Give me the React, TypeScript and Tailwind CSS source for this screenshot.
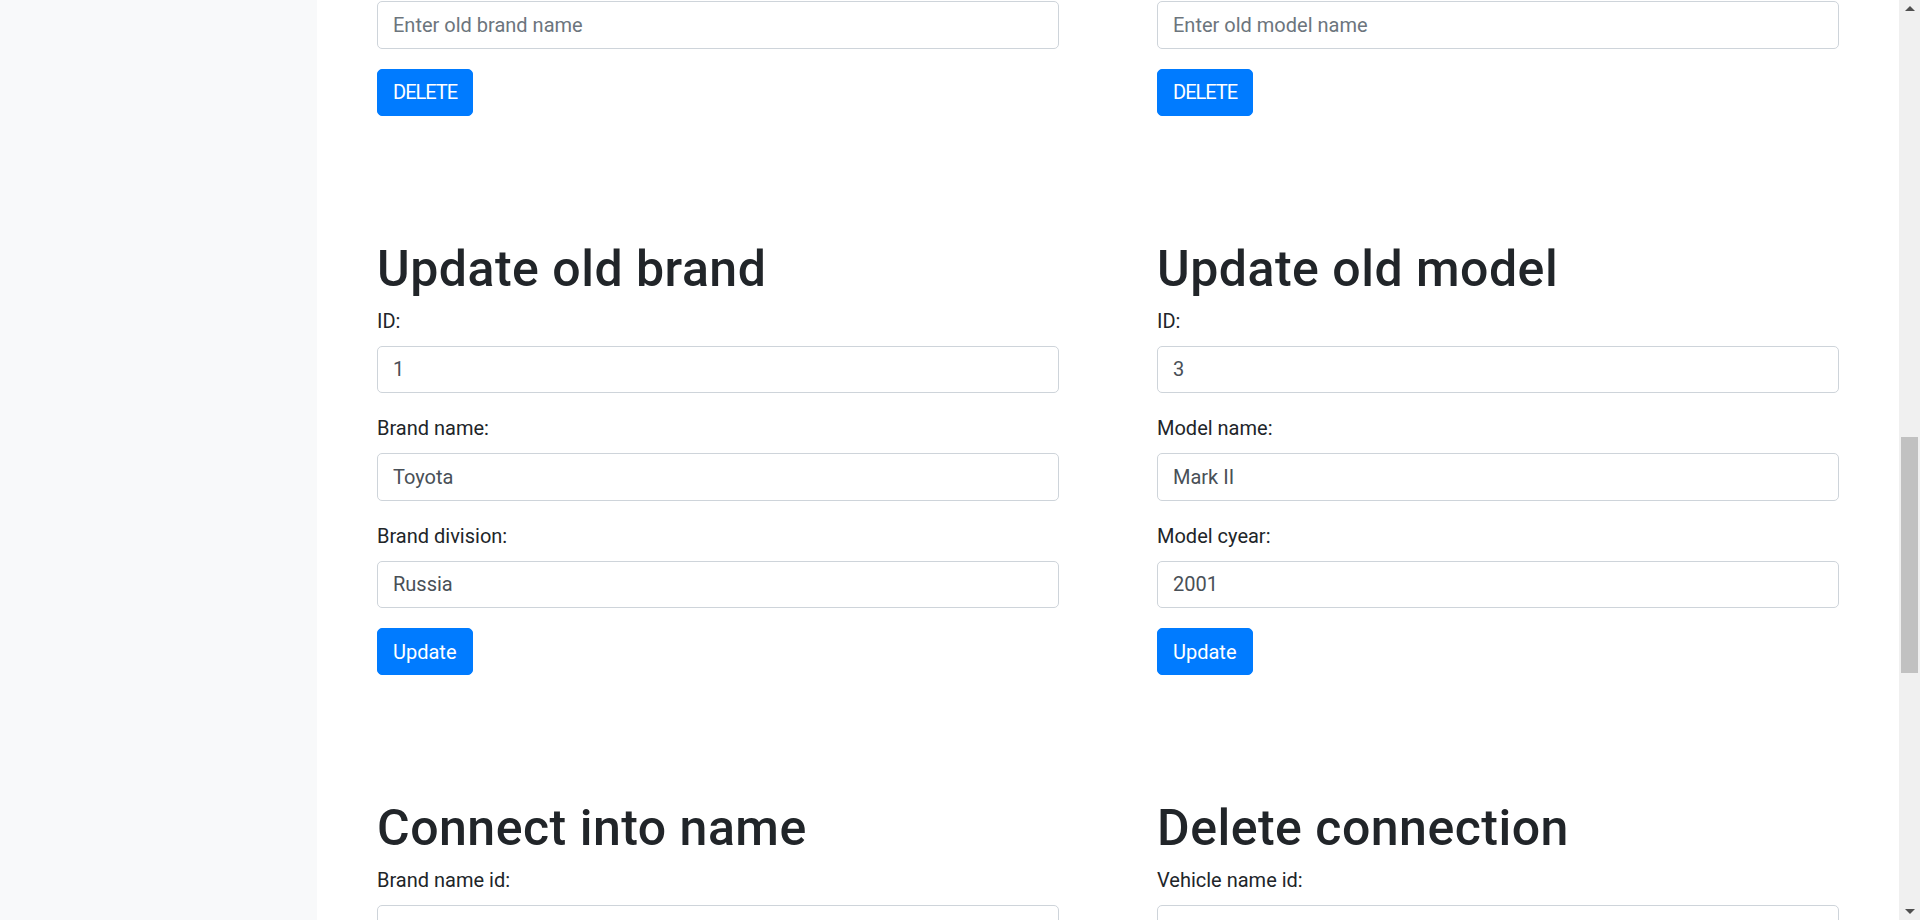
import React from 'react';

type Field = { label: string; value?: string };

function Heading({ children }: { children: React.ReactNode }) {
  return (
    <h1 className="pt-[6px] text-[50px] leading-[54px] font-medium tracking-[0.5px] text-[#212529] mb-[10px]">
      {children}
    </h1>
  );
}

function FormField({ label, value }: Field) {
  return (
    <div className="mb-[20px]">
      <label className="block text-[20px] leading-[30px] text-[#212529] mb-[10px]">{label}</label>
      <input
        readOnly
        value={value ?? ''}
        className="block w-full h-[47.5px] px-[15px] text-[20px] text-[#495057] bg-white border border-[#ced4da] rounded-[5px] outline-none"
      />
    </div>
  );
}

function Button({ children, tight }: { children: React.ReactNode; tight?: boolean }) {
  return (
    <button
      className={
        'px-[15px] py-[7.5px] text-[20px] leading-[30px] text-white bg-[#007bff] border border-[#007bff] rounded-[5px] ' +
        (tight ? 'tracking-[-1px]' : '')
      }
    >
      {children}
    </button>
  );
}

function DeleteBox({ placeholder }: { placeholder: string }) {
  return (
    <div>
      <input
        placeholder={placeholder}
        className="block w-full h-[47.5px] px-[15px] text-[20px] text-[#495057] placeholder:text-[#6c757d] bg-white border border-[#ced4da] rounded-[5px] outline-none mb-[20px]"
      />
      <Button tight>DELETE</Button>
    </div>
  );
}

function UpdateBox({ title, fields }: { title: string; fields: Field[] }) {
  return (
    <div>
      <Heading>{title}</Heading>
      {fields.map((f) => (
        <FormField key={f.label} {...f} />
      ))}
      <Button>Update</Button>
    </div>
  );
}

function Scrollbar() {
  return (
    <div className="w-[21px] shrink-0 bg-[#f0f0f0] flex flex-col items-center">
      <div className="h-[17px] flex items-center justify-center">
        <div className="w-0 h-0 border-l-[5px] border-r-[5px] border-b-[5px] border-l-transparent border-r-transparent border-b-[#505050]" />
      </div>
      <div className="flex-1 w-full px-[2px]">
        <div className="mt-[420px] h-[236px] bg-[#c1c1c1]" />
      </div>
      <div className="h-[17px] flex items-center justify-center">
        <div className="w-0 h-0 border-l-[5px] border-r-[5px] border-t-[5px] border-l-transparent border-r-transparent border-t-[#505050]" />
      </div>
    </div>
  );
}

export default function App() {
  return (
    <div className="flex h-[920px] overflow-hidden bg-white font-['Roboto','Liberation_Sans',sans-serif]">
      <aside className="w-[317px] shrink-0 bg-[#f8f9fa]" />

      <main className="flex-1 px-[60px] pt-px">
        <div className="grid grid-cols-2 gap-x-[98px] gap-y-[120px]">
          {/* Delete */}
          <DeleteBox placeholder="Enter old brand name" />
          <DeleteBox placeholder="Enter old model name" />

          {/* Update */}
          <UpdateBox
            title="Update old brand"
            fields={[
              { label: 'ID:', value: '1' },
              { label: 'Brand name:', value: 'Toyota' },
              { label: 'Brand division:', value: 'Russia' },
            ]}
          />
          <UpdateBox
            title="Update old model"
            fields={[
              { label: 'ID:', value: '3' },
              { label: 'Model name:', value: 'Mark II' },
              { label: 'Model cyear:', value: '2001' },
            ]}
          />

          {/* Connections */}
          <div>
            <Heading>Connect into name</Heading>
            <FormField label="Brand name id:" />
          </div>
          <div>
            <Heading>Delete connection</Heading>
            <FormField label="Vehicle name id:" />
          </div>
        </div>
      </main>

      <Scrollbar />
    </div>
  );
}
